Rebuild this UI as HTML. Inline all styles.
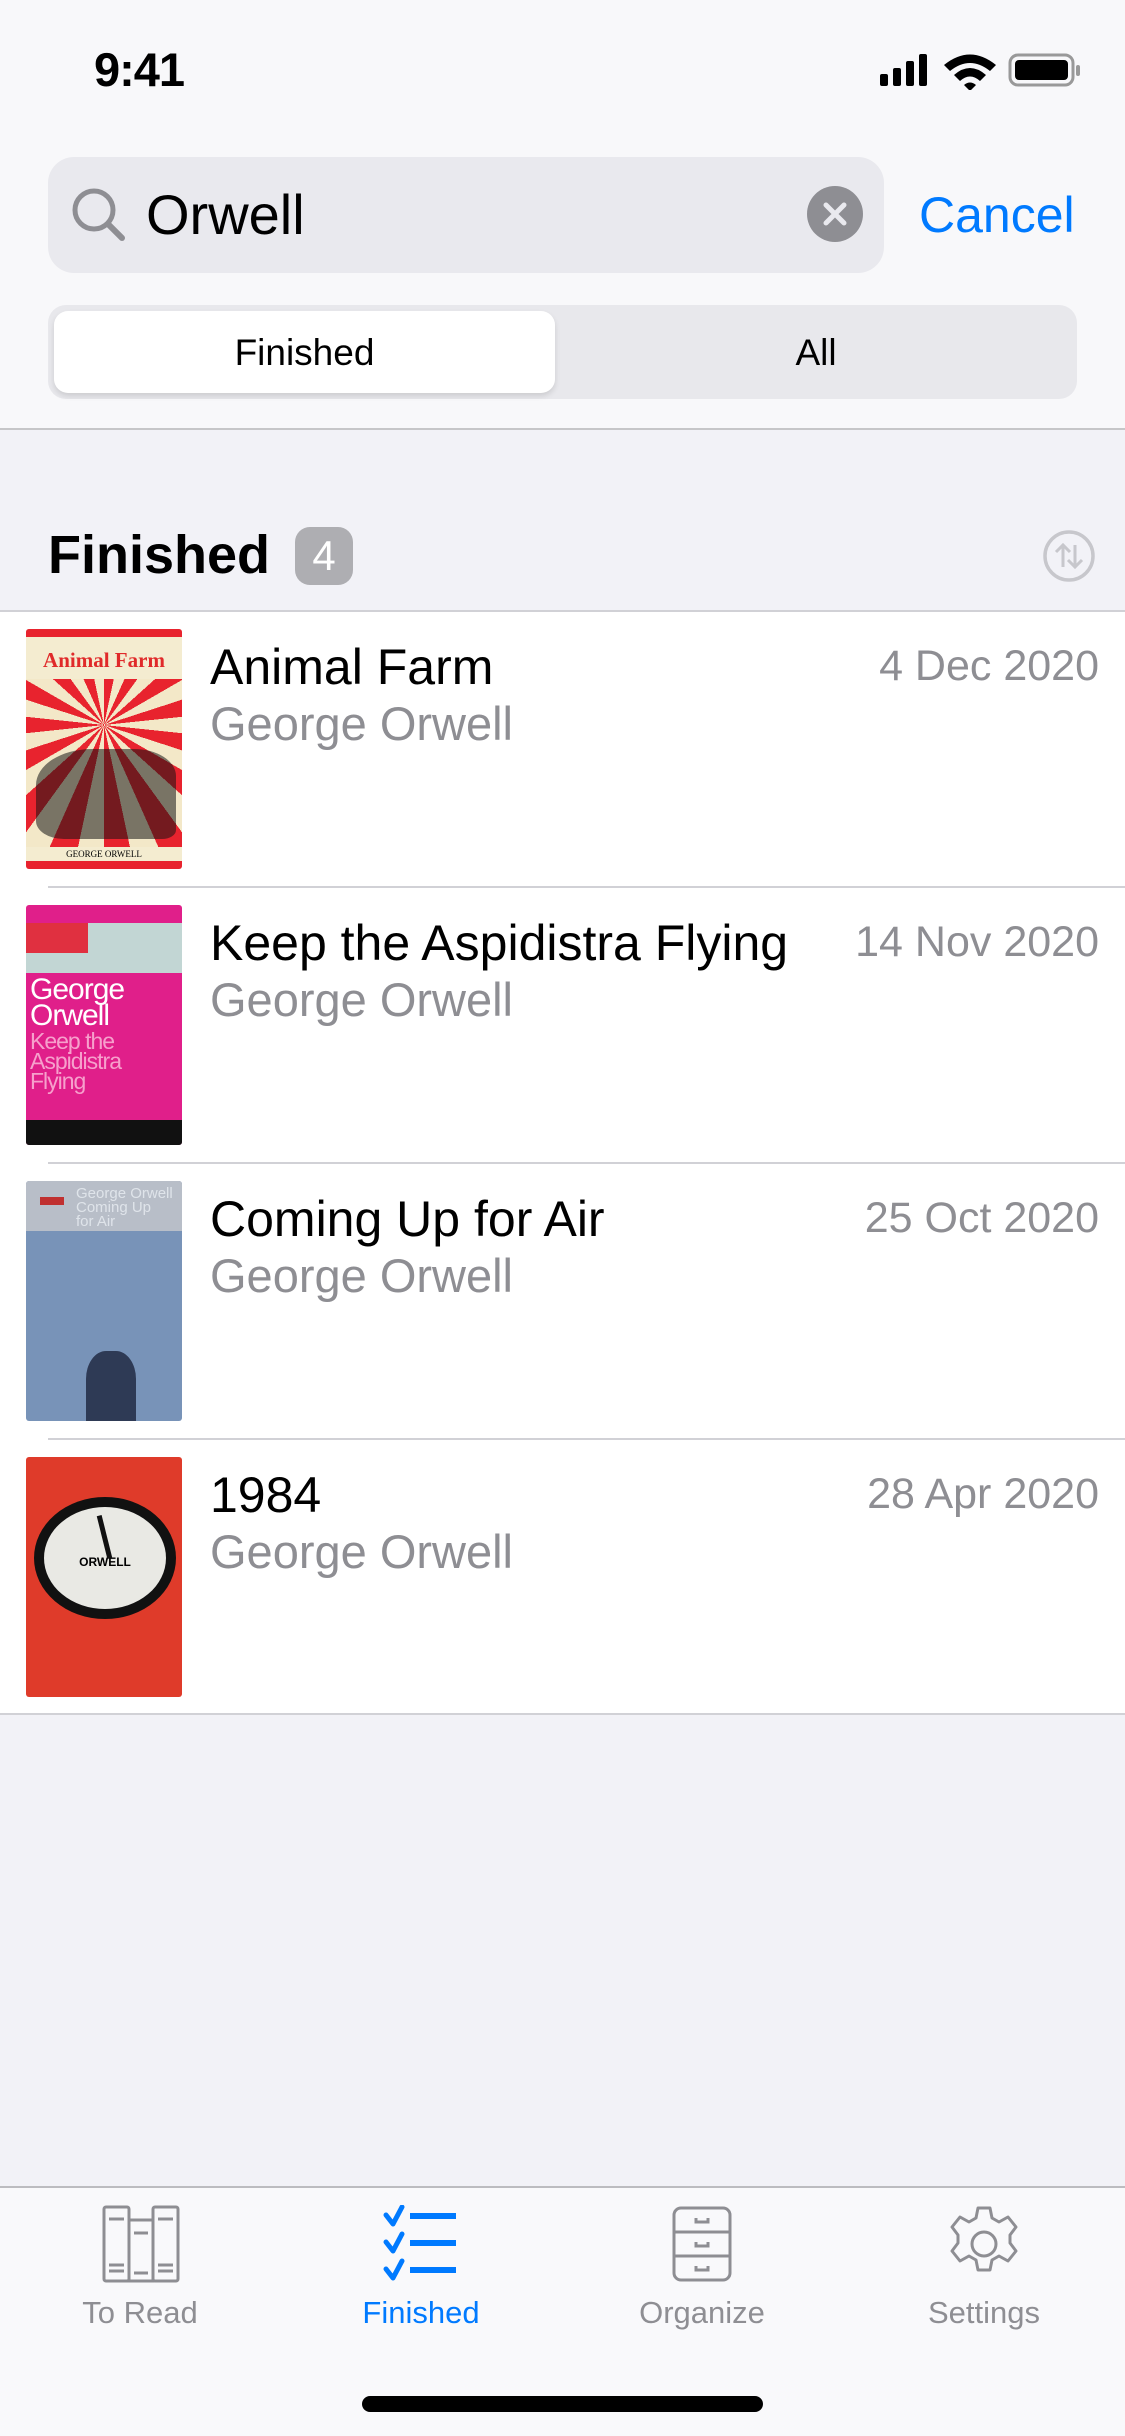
<!DOCTYPE html>
<html><head><meta charset="utf-8"><style>
*{margin:0;padding:0;box-sizing:border-box}
body{width:1125px;height:2436px;background:#f2f2f7;font-family:"Liberation Sans",sans-serif;position:relative;overflow:hidden}
.abs{position:absolute}
.hdr{left:0;top:0;width:1125px;height:430px;background:#f8f8fa;border-bottom:2px solid #c6c6c8}
.list{left:0;top:610px;width:1125px;height:1105px;background:#fff;border-top:2px solid #d1d1d6;border-bottom:2px solid #d1d1d6}
.row{position:absolute;left:0;width:1125px;height:276px}
.sep{position:absolute;left:48px;right:0;bottom:0;height:2px;background:#d1d1d6}
.cover{position:absolute;left:26px;top:17px;width:156px;height:240px;overflow:hidden;border-radius:3px}
.t{position:absolute;left:210px;top:26px;font-size:50px;color:#000;white-space:nowrap}
.a{position:absolute;left:210px;top:84px;font-size:47px;color:#8e8e93}
.d{position:absolute;right:26px;top:30px;font-size:43px;color:#8e8e93}
.tab{position:absolute;top:2186px;left:0;width:1125px;height:250px;background:#f9f9fb;border-top:2px solid #bcbcc0}
.lbl{position:absolute;top:2295px;font-size:31px;color:#8e8e93;width:280px;text-align:center}
</style></head><body>
<div class="abs hdr"></div>
<div class="abs" style="left:94px;top:42px;font-size:47px;font-weight:bold;letter-spacing:-1px">9:41</div>
<svg class="abs" style="left:878px;top:50px" width="206" height="40" viewBox="0 0 206 40">
<rect x="2" y="24" width="8" height="12" rx="2"/><rect x="15" y="18" width="8" height="18" rx="2"/><rect x="28" y="11" width="8" height="25" rx="2"/><rect x="41" y="4" width="8" height="32" rx="2"/>
<path d="M66 15 Q92 -6 118 15 L112 21 Q92 5 72 21Z M76 25 Q92 11 108 25 L102 31 Q92 22 82 31Z M86 35 L92 41 L98 35 Q92 30 86 35Z"/>
<rect x="132" y="5" width="63" height="30" rx="8" fill="none" stroke="#999" stroke-width="3"/><rect x="137" y="10" width="53" height="20" rx="4"/><rect x="198" y="15" width="4" height="11" rx="2" fill="#999"/>
</svg>
<div class="abs" style="left:48px;top:157px;width:836px;height:116px;background:#e9e9ee;border-radius:26px"></div>
<svg class="abs" style="left:70px;top:186px" width="60" height="60" viewBox="0 0 60 60"><circle cx="24" cy="24" r="19" fill="none" stroke="#8e8e93" stroke-width="5"/><path d="M38 38 L52 52" stroke="#8e8e93" stroke-width="6" stroke-linecap="round"/></svg>
<div class="abs" style="left:146px;top:182px;font-size:56px">Orwell</div>
<svg class="abs" style="left:807px;top:186px" width="56" height="56" viewBox="0 0 56 56"><circle cx="28" cy="28" r="28" fill="#8e8e93"/><path d="M19 19 L37 37 M37 19 L19 37" stroke="#e9e9ee" stroke-width="5" stroke-linecap="round"/></svg>
<div class="abs" style="left:919px;top:186px;font-size:50px;color:#007aff">Cancel</div>
<div class="abs" style="left:48px;top:305px;width:1029px;height:94px;background:#e8e8ec;border-radius:18px"></div>
<div class="abs" style="left:54px;top:311px;width:501px;height:82px;background:#fff;border-radius:14px;box-shadow:0 3px 6px rgba(0,0,0,.12)"></div>
<div class="abs" style="left:54px;top:332px;width:501px;text-align:center;font-size:37px">Finished</div>
<div class="abs" style="left:555px;top:332px;width:522px;text-align:center;font-size:37px">All</div>
<div class="abs" style="left:48px;top:524px;font-size:54px;font-weight:bold">Finished</div>
<div class="abs" style="left:295px;top:527px;width:58px;height:58px;border-radius:15px;background:#aeaeb2;color:#fff;font-size:42px;text-align:center;line-height:58px">4</div>
<svg class="abs" style="left:1042px;top:529px" width="54" height="54" viewBox="0 0 54 54"><circle cx="27" cy="27" r="24" fill="none" stroke="#c7c7cc" stroke-width="3.5"/><path d="M21 38 V16 M14 23 L21 16 L28 23 M33 16 V38 M26 31 L33 38 L40 31" fill="none" stroke="#c7c7cc" stroke-width="3"/></svg>
<div class="abs list">
<div class="row" style="top:0"><div class="cover" style="background:repeating-conic-gradient(from 0deg at 50% 40%,#e8232e 0 12deg,#f3e8c8 12deg 24deg)"><div style="position:absolute;left:0;top:0;right:0;height:50px;background:#f4ecd0;color:#e02a2a;font:bold 21px 'Liberation Serif',serif;text-align:center;line-height:46px;border-top:8px solid #e8232e;white-space:nowrap">Animal Farm</div><div style="position:absolute;left:10px;top:120px;width:140px;height:90px;background:rgba(20,20,20,.55);border-radius:40% 30% 10% 20%"></div><div style="position:absolute;left:0;bottom:0;right:0;height:22px;background:#f4ecd0;border-bottom:8px solid #e8232e;font:9px 'Liberation Serif',serif;text-align:center;line-height:14px">GEORGE ORWELL</div></div><div class="t">Animal Farm</div><div class="a">George Orwell</div><div class="d">4 Dec 2020</div><div class="sep"></div></div>
<div class="row" style="top:276px"><div class="cover" style="background:#e01f8a"><div style="height:50px;background:#c2d6d4"><div style="width:62px;height:30px;background:#e03040;margin-top:18px"></div></div><div style="color:#fff;font-size:30px;line-height:26px;padding:4px 4px 0;letter-spacing:-1px">George<br>Orwell</div><div style="color:#f6a0cc;font-size:23px;line-height:20px;padding:2px 4px;letter-spacing:-1px">Keep the<br>Aspidistra<br>Flying</div><div style="position:absolute;left:0;right:0;bottom:0;height:25px;background:#111"></div></div><div class="t">Keep the Aspidistra Flying</div><div class="a">George Orwell</div><div class="d">14 Nov 2020</div><div class="sep"></div></div>
<div class="row" style="top:552px"><div class="cover" style="background:#7893b8"><div style="height:50px;background:#b8bec8;color:#dfe4ea;font-size:15px;line-height:14px;padding:6px 0 0 50px">George Orwell<br>Coming Up<br>for Air</div><div style="position:absolute;left:14px;top:16px;width:24px;height:8px;background:#c03030"></div><div style="position:absolute;left:60px;top:170px;width:50px;height:70px;background:#2e3a55;border-radius:40% 40% 0 0"></div></div><div class="t">Coming Up for Air</div><div class="a">George Orwell</div><div class="d">25 Oct 2020</div><div class="sep"></div></div>
<div class="row" style="top:828px"><div class="cover" style="background:#df3b2a"><div style="position:absolute;left:8px;top:40px;width:142px;height:122px;border-radius:50%;background:#111"></div><div style="position:absolute;left:18px;top:50px;width:122px;height:102px;border-radius:50%;background:#e9e9e4;text-align:center;font:bold 12px 'Liberation Sans',sans-serif;line-height:110px">ORWELL</div><div style="position:absolute;left:76px;top:58px;width:5px;height:44px;background:#111;transform:rotate(-14deg)"></div></div><div class="t">1984</div><div class="a">George Orwell</div><div class="d">28 Apr 2020</div></div>
</div>
<div class="tab"></div>
<svg class="abs" style="left:102px;top:2205px" width="78" height="78" viewBox="0 0 78 78" fill="none" stroke="#8e8e93" stroke-width="3"><rect x="2" y="2" width="25" height="74" rx="2"/><rect x="27" y="15" width="24" height="61"/><rect x="51" y="2" width="25" height="74" rx="2"/><path d="M7 14h15M56 14h15M32 28h14M32 68h14M7 60h15M7 66h15M56 60h15M56 66h15"/></svg>
<svg class="abs" style="left:382px;top:2205px" width="80" height="78" viewBox="0 0 80 78" fill="none" stroke="#007aff"><path d="M4 10 L11 19 L20 2 M4 37 L11 46 L20 29 M4 64 L11 73 L20 56" stroke-width="5" stroke-linecap="round" stroke-linejoin="round"/><path d="M28 11h46M28 38h46M28 65h46" stroke-width="6"/></svg>
<svg class="abs" style="left:672px;top:2206px" width="60" height="76" viewBox="0 0 60 76" fill="none" stroke="#8e8e93" stroke-width="3"><rect x="2" y="2" width="56" height="72" rx="7"/><path d="M2 26h56M2 50h56M24 12v4h12v-4M24 36v4h12v-4M24 60v4h12v-4"/></svg>
<svg class="abs" style="left:945px;top:2205px" width="78" height="78" viewBox="0 0 78 78" fill="none" stroke="#8e8e93" stroke-width="3"><path d="M33 3h12l2 10 7 4 9-5 8 10-6 8v8l6 8-8 10-9-5-7 4-2 10H33l-2-10-7-4-9 5-8-10 6-8v-8l-6-8 8-10 9 5 7-4z" stroke-linejoin="round"/><circle cx="39" cy="39" r="12"/></svg>
<div class="lbl" style="left:0">To Read</div>
<div class="lbl" style="left:281px;color:#007aff">Finished</div>
<div class="lbl" style="left:562px">Organize</div>
<div class="lbl" style="left:844px">Settings</div>
<div class="abs" style="left:362px;top:2396px;width:401px;height:16px;border-radius:8px;background:#000"></div>
</body></html>
